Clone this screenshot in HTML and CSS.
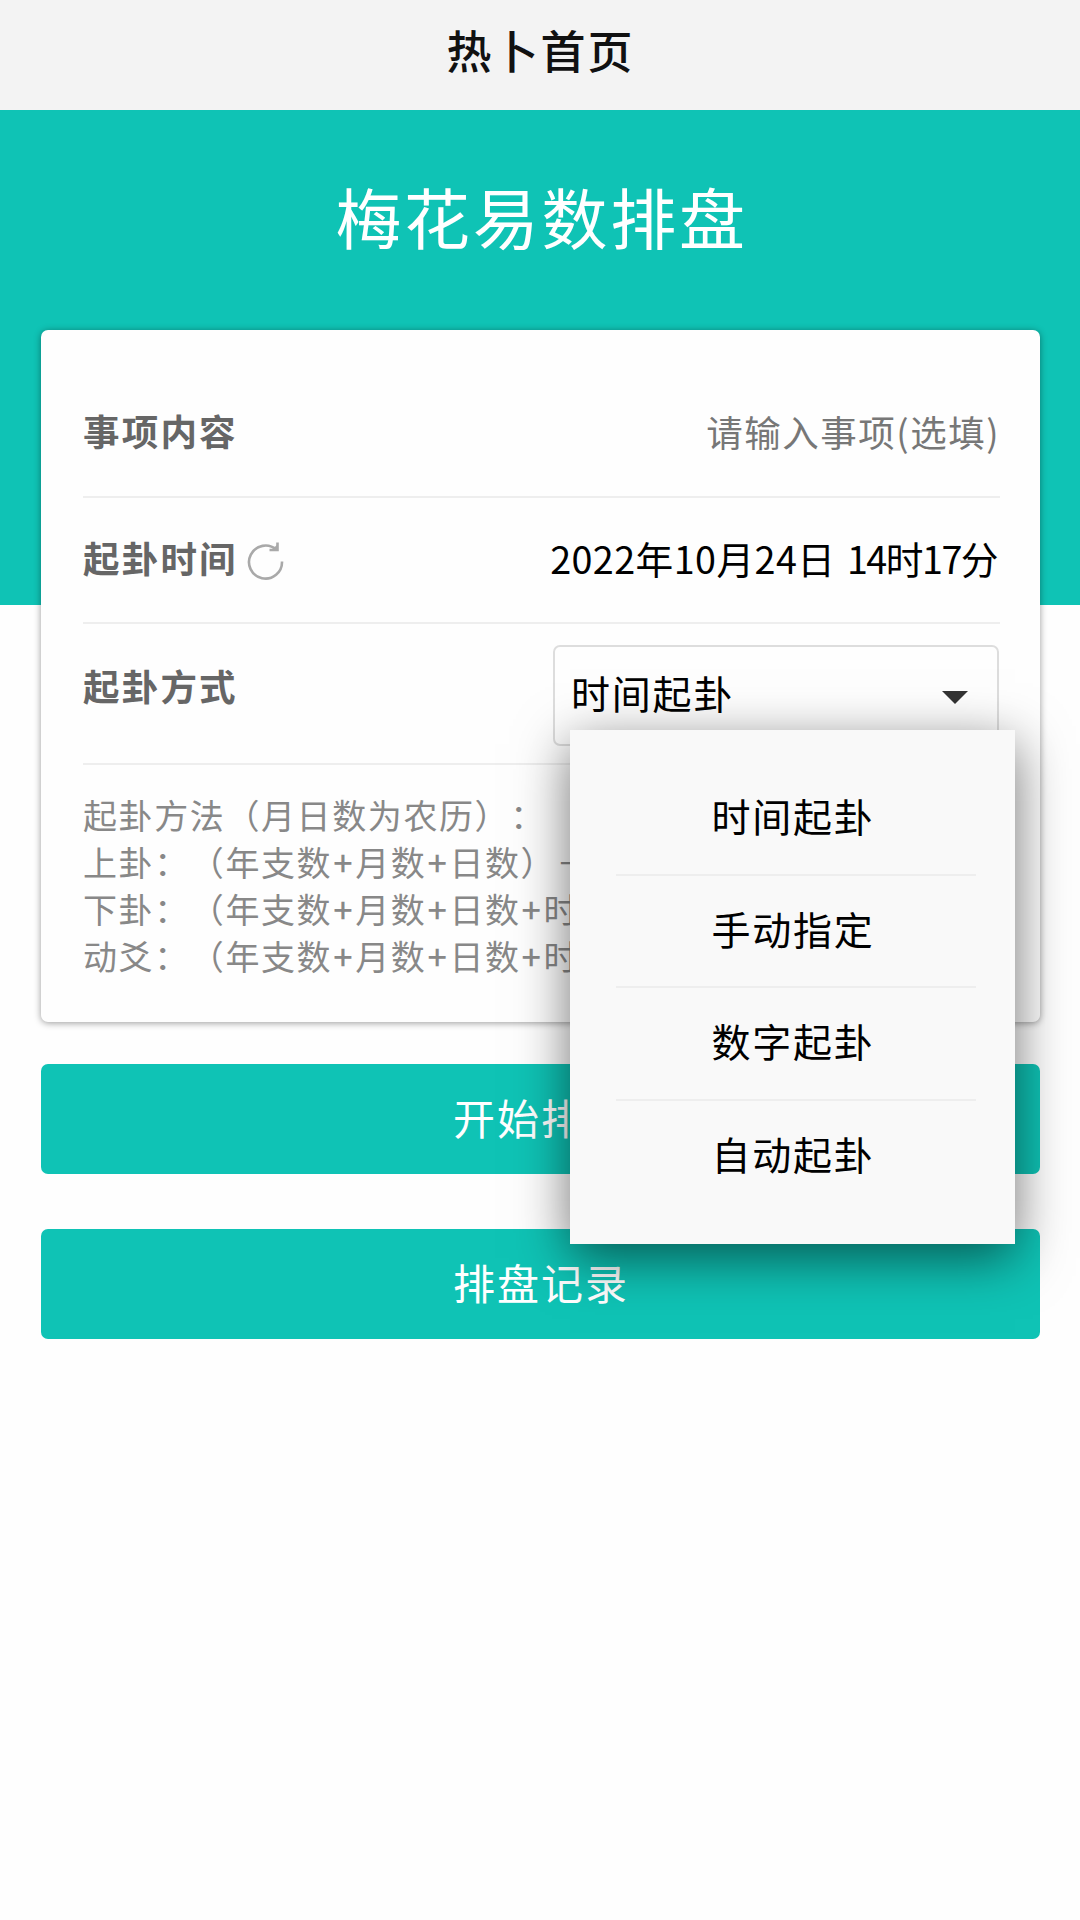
FILE: index.html
```html
<!DOCTYPE html>
<html lang="zh-CN">
<head>
    <meta charset="UTF-8">
    <meta name="viewport" content="width=device-width, initial-scale=1.0">
    <title>热卜首页</title>
    <link rel="stylesheet" href="styles.css">
</head>
<body>
    <header class="navbar">热卜首页</header>

    <div class="banner">
        <h1>梅花易数排盘</h1>
    </div>

    <main class="content">
        <div class="card">
            <div class="row row-matter">
                <label class="label" for="matter">事项内容</label>
                <input class="matter-input" id="matter" type="text" placeholder="请输入事项(选填)">
            </div>
            <div class="row row-time">
                <span class="label">起卦时间</span>
                <svg class="refresh" viewBox="0 0 38 40" fill="none" stroke="#a9a9a9" stroke-width="2.6">
                    <path d="M35 21.5A16.5 16.5 0 1 1 29.5 9.8"/>
                    <path d="M30.5 2.5V10H22.5"/>
                    <path d="M24 10L30 5V10Z" fill="#a9a9a9" stroke="none"/>
                </svg>
                <span class="datetime"><span class="date">2022年10月24日</span> <span class="clock">14时17分</span></span>
            </div>
            <div class="row row-method">
                <span class="label">起卦方式</span>
                <div class="select">
                    <span class="select-value">时间起卦</span>
                    <i class="caret"></i>
                    <ul class="menu">
                        <li>时间起卦</li>
                        <li>手动指定</li>
                        <li>数字起卦</li>
                        <li>自动起卦</li>
                    </ul>
                </div>
            </div>
            <div class="intro">
                <p>起卦方法（月日数为农历）<span class="colon">：</span></p>
                <p>上卦：（年支数<b>+</b>月数<b>+</b>日数）÷8</p>
                <p>下卦：（年支数<b>+</b>月数<b>+</b>日数<b>+</b>时数）÷8</p>
                <p>动爻：（年支数<b>+</b>月数<b>+</b>日数<b>+</b>时数）÷6</p>
            </div>
        </div>

        <button class="btn">开始排盘</button>
        <button class="btn">排盘记录</button>
    </main>
</body>
</html>
```
FILE: styles.css
```css
* {
    box-sizing: border-box;
}

body {
    margin: 0;
    background: #fefefe;
    color: #000;
    font-family: "Noto Sans CJK SC", sans-serif;
}

.navbar {
    height: 110px;
    padding-left: 1px;
    background: #f3f3f3;
    color: #111;
    font-size: 45px;
    font-weight: 500;
    letter-spacing: 2px;
    line-height: 99px;
    text-align: center;
}

/* 顶部色块 */
.banner {
    height: 495px;
    padding: 53px 0 0 3px;
    background: #0fc3b5;
}

.banner h1 {
    margin: 0;
    color: #fff;
    font-size: 66px;
    font-weight: 400;
    letter-spacing: 2.7px;
    line-height: 104px;
    text-align: center;
}

.content {
    position: relative;
    margin-top: -275px;
    padding: 0 40px 0 41px;
}

.card {
    height: 692px;
    margin-bottom: 42px;
    padding: 42px 40px 0 42px;
    background: #fefefe;
    border-radius: 7px;
    box-shadow: 0 1px 7px rgba(0, 0, 0, 0.4);
}

.row {
    display: flex;
    align-items: center;
    border-bottom: 2px solid #eee;
}

.row-matter {
    height: 126px;
    padding-bottom: 6px;
}

.row-time {
    height: 126px;
    padding-bottom: 5px;
}

.row-method {
    height: 141px;
    align-items: flex-start;
}

.label {
    color: #666;
    font-size: 36.5px;
    font-weight: bold;
    letter-spacing: 2.2px;
    line-height: 56px;
}

.row-method .label {
    margin-top: 34px;
}

.matter-input {
    flex: 1;
    min-width: 0;
    padding: 0;
    border: 0;
    outline: 0;
    background: none;
    font-family: inherit;
    font-size: 36.5px;
    letter-spacing: 1.5px;
    text-align: right;
}

.matter-input::placeholder {
    color: #777;
}

.refresh {
    width: 38px;
    height: 40px;
    margin: 5px 0 0 9px;
}

.datetime {
    margin: 0 3px 0 auto;
    font-size: 37.7px;
    word-spacing: 3px;
}

.date {
    letter-spacing: 0.45px;
}

.clock {
    letter-spacing: -1.5px;
}

/* 下拉选择 */
.select {
    position: relative;
    display: flex;
    justify-content: space-between;
    align-items: center;
    width: 446px;
    height: 101px;
    margin: 21px 1px 0 auto;
    padding: 0 29px 0 16px;
    border: 2px solid #ddd;
    border-radius: 7px;
    font-size: 39px;
    letter-spacing: 1.8px;
}

.select-value {
    margin-bottom: 7px;
}

.caret {
    margin-top: 3px;
    border: 13px solid transparent;
    border-top-color: #333;
    border-bottom: 0;
}

.menu {
    position: absolute;
    top: 83px;
    left: 15px;
    width: 445px;
    height: 514px;
    margin: 0;
    padding: 33px 39px 0 46px;
    background: #f9f9f9;
    box-shadow: 0 14px 50px rgba(0, 0, 0, 0.55);
    list-style: none;
    text-align: center;
}

.menu li {
    height: 112.7px;
    padding-right: 6px;
    border-bottom: 2px solid #eee;
    line-height: 105px;
}

.menu li:last-child {
    border-bottom: 0;
}

.intro {
    padding-top: 26px;
    color: #888;
    font-size: 34px;
    letter-spacing: 1.6px;
    line-height: 47px;
    text-spacing-trim: space-all;
    white-space: nowrap;
}

.intro p {
    margin: 0;
}

.intro b {
    margin-left: 1px;
    font-weight: 500;
    letter-spacing: 2.6px;
}

.colon {
    font-family: "Noto Sans CJK JP", sans-serif;
}

.btn {
    display: block;
    width: 100%;
    height: 110px;
    margin-bottom: 55px;
    padding: 0 0 6px 1px;
    border: 0;
    border-radius: 7px;
    background: #0fc3b5;
    color: #fff;
    font-family: inherit;
    font-size: 42px;
    letter-spacing: 2px;
}
```
